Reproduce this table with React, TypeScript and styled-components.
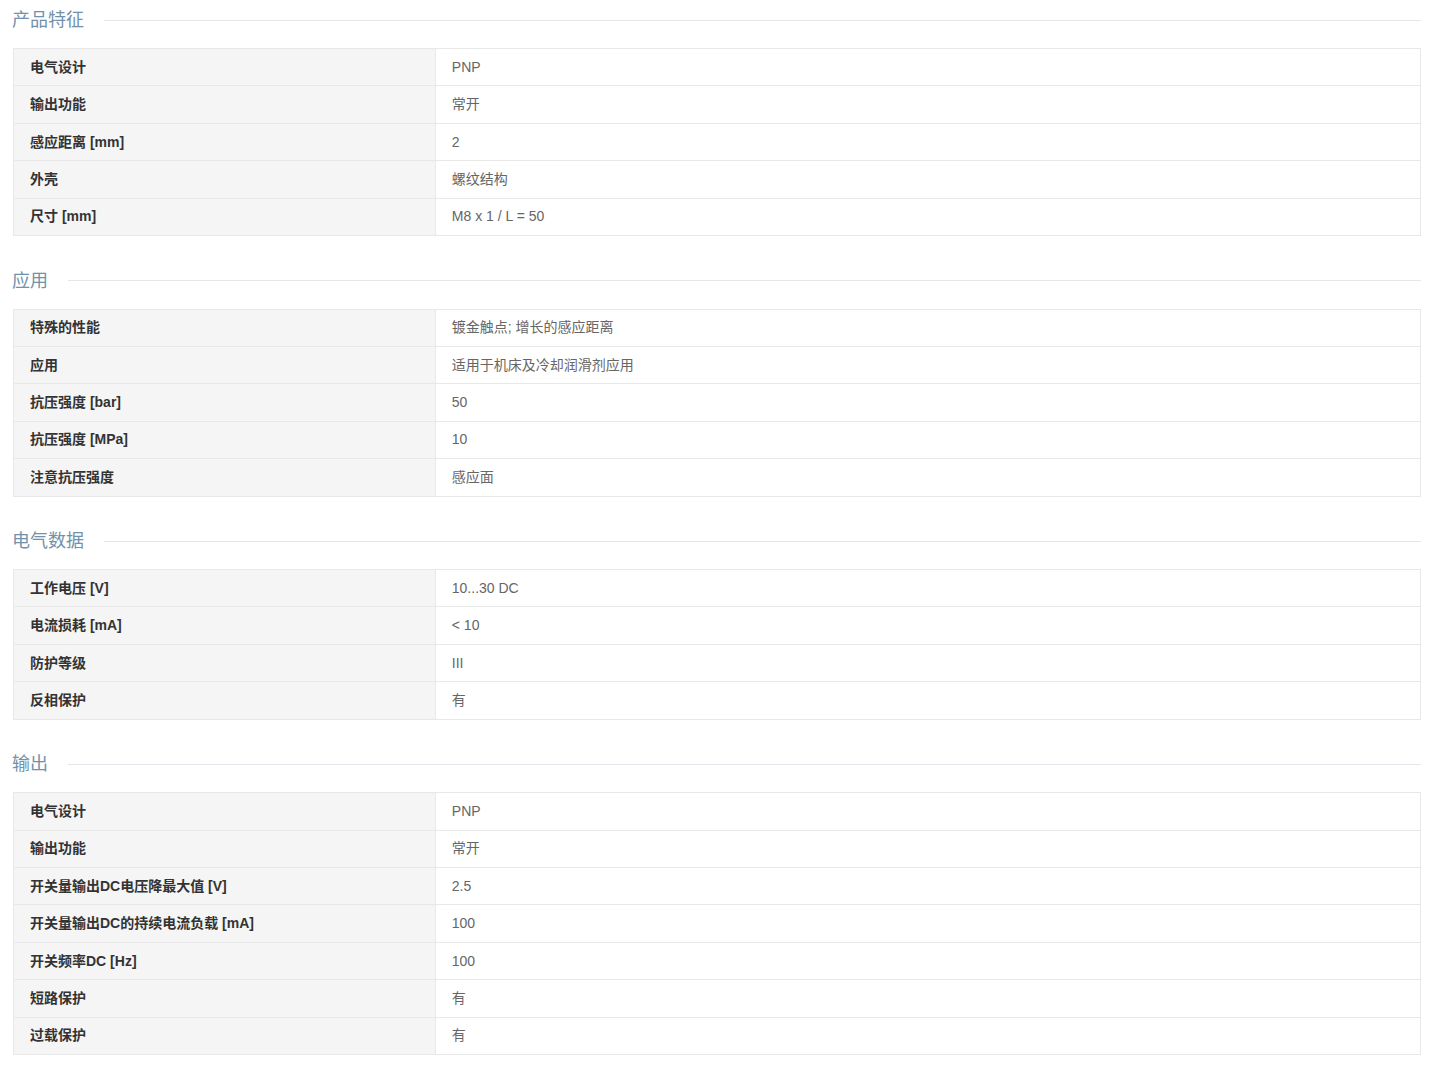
import React from "react";
import styled, { createGlobalStyle } from "styled-components";

const GlobalStyle = createGlobalStyle`
  html, body { margin: 0; padding: 0; background: #fff; }
  body {
    padding: 8px;
    font-family: "Liberation Sans", Arial, "Noto Sans CJK SC", sans-serif;
    color: #333;
  }
`;

const Page = styled.div`
  padding: 0 1px 0 4px;
  display: flex;
  flex-direction: column;
  gap: 32.5px;
`;

const Section = styled.section`
  display: flex;
  flex-direction: column;
  gap: 16px;
`;

const TitleRow = styled.div`
  display: flex;
  align-items: center;
  gap: 20px;
  height: 24px;
`;

const Title = styled.h3`
  margin: 0;
  font-size: 18px;
  font-weight: normal;
  line-height: 24px;
  color: #7192aa;
  white-space: nowrap;
`;

const Rule = styled.div`
  flex: 1;
  height: 1px;
  background: #e3e6ea;
`;

const Table = styled.div`
  margin-left: 1px;
  border: 1px solid #e8e8e8;
  display: flex;
  flex-direction: column;
`;

const Row = styled.div`
  display: grid;
  grid-template-columns: 30% 1fr;
  box-sizing: border-box;
  height: 37.42px;
  border-top: 1px solid #e8e8e8;
  &:first-child {
    border-top: none;
    height: 36.42px;
  }
`;

const Label = styled.div`
  display: flex;
  align-items: center;
  background: #f5f5f5;
  border-right: 1px solid #e8e8e8;
  padding: 0 16px 1px;
  font-size: 14px;
  line-height: 18px;
  font-weight: bold;
  color: #333;
`;

const Value = styled.div`
  display: flex;
  align-items: center;
  padding: 0 16px 1px;
  font-size: 14px;
  line-height: 18px;
  color: #666;
`;

type Spec = [string, string];

const sections: { title: string; rows: Spec[] }[] = [
  {
    title: "产品特征",
    rows: [
      ["电气设计", "PNP"],
      ["输出功能", "常开"],
      ["感应距离 [mm]", "2"],
      ["外壳", "螺纹结构"],
      ["尺寸 [mm]", "M8 x 1 / L = 50"],
    ],
  },
  {
    title: "应用",
    rows: [
      ["特殊的性能", "镀金触点; 增长的感应距离"],
      ["应用", "适用于机床及冷却润滑剂应用"],
      ["抗压强度 [bar]", "50"],
      ["抗压强度 [MPa]", "10"],
      ["注意抗压强度", "感应面"],
    ],
  },
  {
    title: "电气数据",
    rows: [
      ["工作电压 [V]", "10...30 DC"],
      ["电流损耗 [mA]", "< 10"],
      ["防护等级", "III"],
      ["反相保护", "有"],
    ],
  },
  {
    title: "输出",
    rows: [
      ["电气设计", "PNP"],
      ["输出功能", "常开"],
      ["开关量输出DC电压降最大值 [V]", "2.5"],
      ["开关量输出DC的持续电流负载 [mA]", "100"],
      ["开关频率DC [Hz]", "100"],
      ["短路保护", "有"],
      ["过载保护", "有"],
    ],
  },
];

export default function App() {
  return (
    <>
      <GlobalStyle />
      <Page>
        {sections.map((s) => (
          <Section key={s.title}>
            <TitleRow>
              <Title>{s.title}</Title>
              <Rule />
            </TitleRow>
            <Table>
              {s.rows.map(([k, v], i) => (
                <Row key={i}>
                  <Label>{k}</Label>
                  <Value>{v}</Value>
                </Row>
              ))}
            </Table>
          </Section>
        ))}
      </Page>
    </>
  );
}
